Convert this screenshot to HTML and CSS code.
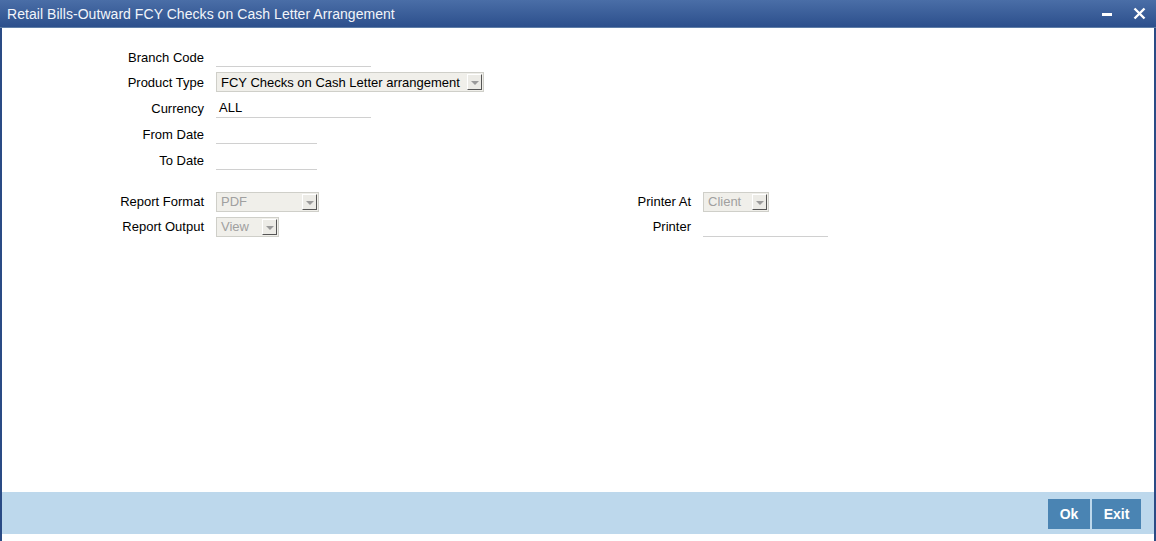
FILE: index.html
```html
<!DOCTYPE html>
<html lang="en">
<head>
  <meta charset="UTF-8">
  <title>Retail Bills-Outward FCY Checks on Cash Letter Arrangement</title>
  <link rel="stylesheet" href="styles.css">
</head>
<body>
  <div class="window">
    <!-- Title Bar -->
    <header class="titlebar">
      <h1>Retail Bills-Outward FCY Checks on Cash Letter Arrangement</h1>
      <div class="win-controls">
        <svg class="win-min" width="10" height="4" viewBox="0 0 10 4"><rect x="0" y="0" width="10" height="3" fill="#fff"/></svg>
        <svg class="win-close" width="13" height="13" viewBox="0 0 13 13"><path d="M1.5 1.5 L11.5 11.5 M11.5 1.5 L1.5 11.5" stroke="#fff" stroke-width="2.4"/></svg>
      </div>
    </header>

    <!-- Form -->
    <main class="content">
      <div class="block">
        <div class="row first">
          <label class="lbl">Branch Code</label>
          <div class="txt w155"></div>
        </div>
        <div class="row">
          <label class="lbl">Product Type</label>
          <div class="sel w268"><span>FCY Checks on Cash Letter arrangement</span><i class="arrow"></i></div>
        </div>
        <div class="row">
          <label class="lbl">Currency</label>
          <div class="txt w155">ALL</div>
        </div>
        <div class="row">
          <label class="lbl">From Date</label>
          <div class="txt w101"></div>
        </div>
        <div class="row">
          <label class="lbl">To Date</label>
          <div class="txt w101"></div>
        </div>
      </div>

      <div class="block two-col">
        <div class="col">
          <div class="row">
            <label class="lbl">Report Format</label>
            <div class="sel off w103"><span>PDF</span><i class="arrow"></i></div>
          </div>
          <div class="row">
            <label class="lbl">Report Output</label>
            <div class="sel off w63"><span>View</span><i class="arrow"></i></div>
          </div>
        </div>
        <div class="col">
          <div class="row">
            <label class="lbl">Printer At</label>
            <div class="sel off w66"><span>Client</span><i class="arrow"></i></div>
          </div>
          <div class="row">
            <label class="lbl">Printer</label>
            <div class="txt w125"></div>
          </div>
        </div>
      </div>
    </main>

    <!-- Footer -->
    <footer class="actions">
      <button class="btn">Ok</button>
      <button class="btn">Exit</button>
    </footer>
  </div>
</body>
</html>
```

FILE: styles.css
```css
/* Global */
html, body {
  margin: 0;
  padding: 0;
  height: 100%;
  background: #ffffff;
  font-family: "Liberation Sans", Arial, sans-serif;
  font-size: 13px;
  color: #000;
}

.window {
  height: 541px;
  box-sizing: border-box;
  border-left: 2px solid #2a4b85;
  border-right: 2px solid #2a4b85;
  display: flex;
  flex-direction: column;
  padding-bottom: 7px;
}

/* Title bar */
.titlebar {
  height: 28px;
  box-sizing: border-box;
  margin: 0 -2px;
  padding: 0 10px 0 7px;
  display: flex;
  align-items: center;
  justify-content: space-between;
  background: linear-gradient(#4a6ea7, #2c4f8c);
  border-bottom: 1px solid #5f7ea8;
}
.titlebar h1 {
  margin: 0;
  font-size: 14px;
  font-weight: normal;
  color: #f2f5fa;
  letter-spacing: 0.05px;
}
.win-controls {
  display: flex;
  align-items: center;
  gap: 21px;
}
.win-min {
  margin-top: 2px;
}

/* Form */
.content {
  flex: 1;
  padding: 16px 0 0 12px;
}
.block {
  margin-bottom: 16px;
}
.two-col {
  display: flex;
}
.col {
  width: 487px;
}
.row {
  height: 26px;
  display: flex;
  align-items: center;
  gap: 12px;
}
.row.first {
  margin-bottom: -1px;
}
.two-col .row {
  height: 25px;
}
.lbl {
  width: 190px;
  text-align: right;
  color: #000;
}

.txt {
  height: 19px;
  line-height: 19px;
  padding-left: 3px;
  box-sizing: content-box;
  border-bottom: 1px solid #d0d0d0;
}
.w155 { width: 152px; }
.w101 { width: 98px; }
.w125 { width: 122px; }

.sel {
  height: 20px;
  box-sizing: border-box;
  display: flex;
  align-items: center;
  justify-content: space-between;
  padding: 0 1px 0 4px;
  border: 1px solid #cfcfc9;
  background: #f0efea;
  color: #000;
}
.sel.off {
  color: #a0a0a0;
}
.w268 { width: 268px; }
.w103 { width: 103px; }
.w63 { width: 63px; }
.w66 { width: 66px; }

.arrow {
  width: 15px;
  height: 16px;
  box-sizing: border-box;
  border-top: 1px solid #fff;
  border-left: 1px solid #fff;
  border-right: 1px solid #555;
  border-bottom: 1px solid #555;
  background: #ecebe6;
  position: relative;
}
.arrow::after {
  content: "";
  position: absolute;
  left: 3px;
  top: 6px;
  border-left: 4px solid transparent;
  border-right: 4px solid transparent;
  border-top: 4px solid #9a9a9a;
}

/* Footer */
.actions {
  height: 42px;
  box-sizing: border-box;
  background: #bdd8ec;
  display: flex;
  justify-content: flex-end;
  align-items: center;
  gap: 2px;
  padding-right: 13px;
}
.btn {
  height: 30px;
  border: none;
  background: #4a84b3;
  color: #fff;
  font-family: "Liberation Sans", Arial, sans-serif;
  font-size: 14px;
  font-weight: bold;
  padding: 0;
  margin-top: 2px;
}
.btn:first-child {
  width: 42px;
}
.btn:last-child {
  width: 49px;
}
```
